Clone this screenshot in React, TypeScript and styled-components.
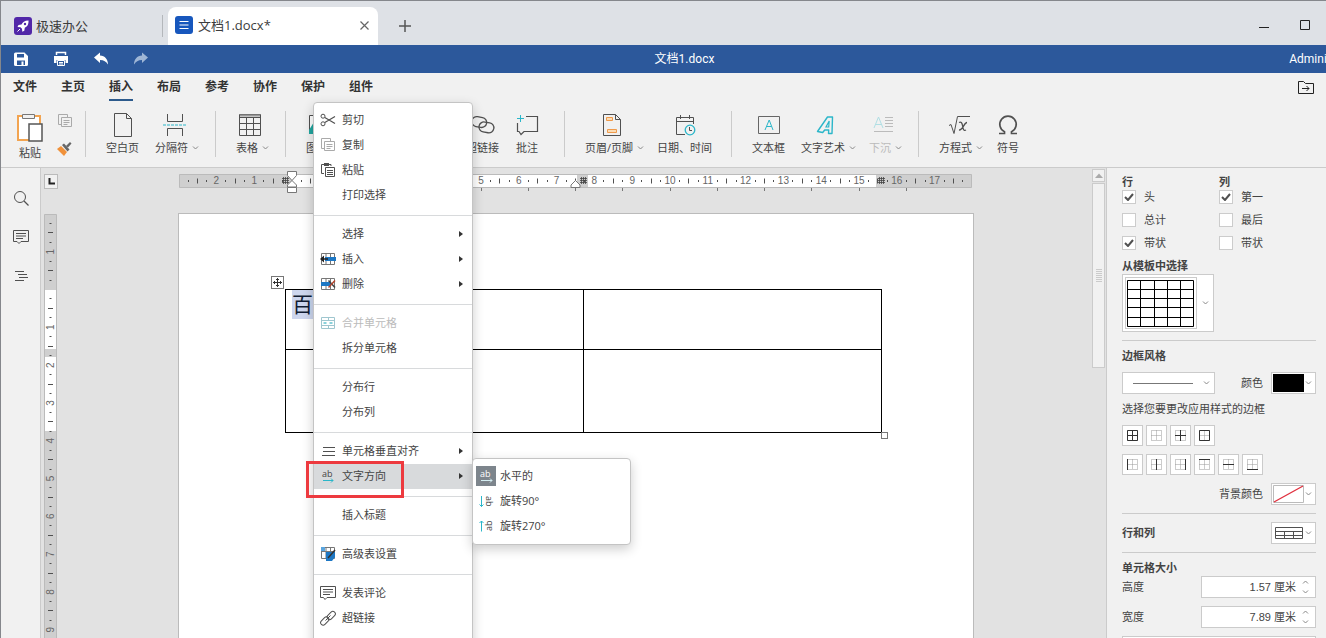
import React from 'react';
import styled, { createGlobalStyle, css } from 'styled-components';

const ui = '"Open Sans", "Noto Sans CJK SC", sans-serif';
const narrow = 'Roboto, "Noto Sans CJK SC", sans-serif';
const arial = '"Liberation Sans", "Noto Sans CJK SC", sans-serif';

const GlobalStyle = createGlobalStyle`
  * { box-sizing: border-box; }
  html, body, #root { height: 100%; }
  body { margin: 0; font-family: ${ui}; font-size: 11px; line-height: 14px; color: #444; overflow: hidden; }
  button { font: inherit; color: inherit; background: none; border: 0; padding: 0; margin: 0; }
  ul { list-style: none; margin: 0; padding: 0; }
  svg { display: block; flex: none; }
`;

const Frame = styled.div`
  position: relative;
  height: 100vh;
  display: flex;
  flex-direction: column;
  overflow: hidden;
  border-top: 1px solid #85878c;
  border-left: 1px solid #85878c;
  background: #f1f1f1;
`;

/* window tabs */
const WindowTabs = styled.header`
  flex: none;
  display: flex;
  align-items: flex-end;
  height: 44px;
  background: #dee1e6;
  font-size: 13px;
  line-height: 18px;
  color: #3c3c3c;
`;
const HomeTab = styled.button`
  display: flex;
  align-items: center;
  gap: 4px;
  width: 161px;
  height: 37px;
  margin-bottom: 1px;
  padding-left: 13px;
`;
const TabDivider = styled.span`
  width: 1px;
  height: 22px;
  margin: 0 5px 8px 0;
  background: #b4b7bb;
`;
const DocTab = styled.div`
  display: flex;
  align-items: center;
  gap: 5px;
  width: 210px;
  height: 38px;
  padding: 0 8px 2px 7px;
  background: #fff;
  border-radius: 8px 8px 0 0;
  span { flex: 1; }
`;
const NewTab = styled.button`
  display: flex;
  align-items: center;
  height: 38px;
  margin: 0 auto 0 21px;
`;
const WindowButtons = styled.div`
  display: flex;
  align-items: center;
  gap: 31px;
  height: 40px;
  padding-right: 16px;
`;

/* title bar */
const TitleBar = styled.div`
  flex: none;
  display: grid;
  grid-template-columns: 1fr auto 1fr;
  align-items: center;
  height: 28px;
  margin-right: -42px;
  background: #2c589b;
  color: #fff;
  font-family: ${narrow};
  font-size: 12px;
  line-height: 16px;
`;
const QuickActions = styled.div`
  display: flex;
  gap: 24px;
  padding-left: 12px;
`;
const UserName = styled.span`
  justify-self: end;
  padding-right: 6px;
`;

/* ribbon */
const MenuTabs = styled.nav`
  flex: none;
  display: flex;
  gap: 24px;
  height: 29px;
  padding: 5px 12px 0;
`;
const MenuTab = styled.button<{ $active?: boolean }>`
  height: 23px;
  padding-bottom: 3px;
  font-size: 12px;
  font-weight: 700;
  line-height: 18px;
  color: #333;
  border-bottom: 2px solid ${p => (p.$active ? '#2c5a8c' : 'transparent')};
`;
const FolderButton = styled.button`
  margin-left: auto;
  height: 20px;
`;
const Ribbon = styled.div`
  flex: none;
  display: flex;
  height: 66px;
  padding-top: 9px;
  border-bottom: 1px solid #cbcbcb;
`;
const Group = styled.div<{ $end?: number; $wide?: boolean; $last?: boolean }>`
  flex: none;
  display: flex;
  width: ${p => (p.$wide ? '279px' : 'auto')};
  height: 46px;
  padding: 2px ${p => p.$end ?? 3}px 0 20px;
  border-right: 1px solid ${p => (p.$last ? 'transparent' : '#cbcbcb')};
`;
const FarTools = styled.div`
  display: flex;
  margin-left: auto;
`;
const ClipboardGroup = styled.div`
  flex: none;
  display: flex;
  gap: 13px;
  width: 85px;
  height: 46px;
  padding: 2px 0 0 15px;
  border-right: 1px solid #cbcbcb;
`;
const PasteButton = styled.button`
  display: flex;
  flex-direction: column;
  align-items: center;
  gap: 3px;
`;
const SmallButtons = styled.div`
  display: flex;
  flex-direction: column;
  gap: 12px;
`;
const Tool = styled.button<{ $menu?: boolean }>`
  display: flex;
  flex-direction: column;
  align-items: center;
  gap: 4px;
  height: 44px;
  margin-right: ${p => (p.$menu ? 13 : 16)}px;
  white-space: nowrap;
  color: #444;
  > svg { margin-right: ${p => (p.$menu ? 5 : 0)}px; }
  &:disabled { color: #bbb; }
`;
const ToolLabel = styled.span`
  display: flex;
  align-items: center;
  gap: 4px;
`;

/* body */
const Body = styled.div`
  flex: 1;
  min-height: 0;
  display: flex;
`;
const SideBar = styled.aside`
  flex: none;
  display: flex;
  flex-direction: column;
  align-items: center;
  gap: 19px;
  width: 40px;
  padding-top: 20px;
  border-right: 1px solid #cbcbcb;
`;
const Workspace = styled.main`
  flex: 1;
  min-width: 0;
  display: grid;
  grid-template-columns: 19px minmax(0, 1fr) 14px;
  grid-template-rows: 45px minmax(0, 1fr);
  background: #e2e2e2;
  overflow: hidden;
`;
const Corner = styled.button`
  display: grid;
  place-items: center;
  width: 14px;
  height: 15px;
  margin: 6px 0 0 3px;
  background: #f1f1f1;
  border: 1px solid #bbb;
`;
const RulerRow = styled.div`
  display: flex;
  justify-content: center;
  padding-top: 2px;
  svg { overflow: visible; }
`;
const RulerColumn = styled.div`
  padding: 1px 0 0 3px;
  overflow: hidden;
`;
const Scroller = styled.div`
  grid-column: 3;
  grid-row: 1 / 3;
  display: flex;
  flex-direction: column;
  gap: 1px;
  padding: 1px 1px 0 0;
`;
const ScrollUp = styled.button`
  display: grid;
  place-items: center;
  height: 13px;
  background: #f1f1f1;
  border: 1px solid #cbcbcb;
`;
const Thumb = styled.div`
  display: grid;
  place-items: center;
  height: 185px;
  background: #f1f1f1;
  border: 1px solid #cbcbcb;
`;
const PageArea = styled.div`
  grid-column: 2;
  grid-row: 2;
  display: flex;
  justify-content: center;
`;
const Page = styled.div`
  flex: none;
  width: 796px;
  padding: 75px 91px 0 106px;
  background: #fff;
  border: 1px solid #bbb;
  border-bottom: 0;
`;
const TableBox = styled.div`
  position: relative;
`;
const DocTable = styled.table`
  width: 100%;
  table-layout: fixed;
  border-collapse: collapse;
  td { border: 1px solid #000; padding: 0 6px; vertical-align: top; }
`;
const DocRow = styled.tr<{ $tall?: boolean }>`
  height: ${p => (p.$tall ? 83 : 60)}px;
`;
const Selected = styled.span`
  display: inline-block;
  font-size: 21px;
  line-height: 29px;
  color: #111c33;
  background: #cdd6ee;
`;
const MoveHandle = styled.button`
  position: absolute;
  top: -13px;
  left: -14px;
  display: grid;
  place-items: center;
  width: 13px;
  height: 13px;
  background: #fff;
  border: 1px solid #777;
`;
const SizeHandle = styled.span`
  position: absolute;
  right: -6px;
  bottom: -6px;
  width: 7px;
  height: 7px;
  background: #fff;
  border: 1px solid #777;
`;

/* right panel */
const Panel = styled.aside`
  flex: none;
  width: 220px;
  padding: 7px 10px 0 15px;
  border-left: 1px solid #cbcbcb;
  overflow: hidden;
`;
const CheckColumns = styled.div`
  display: grid;
  grid-template-columns: 1fr 1fr;
`;
const Heading = styled.h2`
  margin: 0;
  padding-bottom: 2px;
  font-size: 11px;
  line-height: 13px;
  font-weight: 700;
  color: #444;
`;
const CheckList = styled.div`
  display: flex;
  flex-direction: column;
  gap: 9px;
`;
const CheckLabel = styled.label`
  display: grid;
  grid-template-columns: 14px 1fr;
  column-gap: 8px;
  align-items: center;
  svg { grid-area: 1 / 1; margin-left: 2px; pointer-events: none; }
`;
const Box = styled.input`
  grid-area: 1 / 1;
  appearance: none;
  width: 14px;
  height: 14px;
  margin: 0;
  background: #fff;
  border: 1px solid #ccc;
`;
const field = css`
  background: #fff;
  border: 1px solid #cbcbcb;
`;
const TemplateButton = styled.button`
  ${field}
  display: flex;
  align-items: center;
  gap: 5px;
  width: 92px;
  height: 58px;
  padding: 2px;
`;
const Preview = styled.span`
  display: grid;
  place-items: center;
  width: 72px;
  height: 52px;
  border: 1px solid #cbcbcb;
`;
const Rule = styled.hr`
  height: 1px;
  margin: 8px 0;
  border: 0;
  background: #cbcbcb;
`;
const Row = styled.div<{ $push?: boolean }>`
  display: flex;
  align-items: center;
  justify-content: ${p => (p.$push ? 'flex-end' : 'space-between')};
  gap: 8px;
`;
const RightPart = styled.div`
  display: flex;
  align-items: center;
  gap: 8px;
`;
const LineButton = styled.button`
  ${field}
  display: flex;
  align-items: center;
  justify-content: space-between;
  width: 93px;
  height: 22px;
  padding: 0 4px 0 10px;
`;
const SwatchButton = styled.button`
  ${field}
  display: flex;
  align-items: center;
  justify-content: space-between;
  width: 45px;
  height: 22px;
  padding: 0 3px 0 1px;
`;
const Swatch = styled.span`
  width: 31px;
  height: 18px;
  background: #000;
`;
const Stack = styled.div<{ $top: number; $gap?: number }>`
  display: flex;
  flex-direction: column;
  gap: ${p => p.$gap ?? 0}px;
  padding-top: ${p => p.$top}px;
`;
const BorderRow = styled.div`
  display: flex;
  gap: 3px;
`;
const BorderButton = styled.button`
  ${field}
  display: grid;
  place-items: center;
  width: 21px;
  height: 21px;
`;
const Spin = styled.div`
  ${field}
  display: flex;
  align-items: center;
  width: 115px;
  height: 22px;
  padding-right: 6px;
`;
const SpinInput = styled.input`
  flex: 1;
  min-width: 0;
  padding: 0 6px 0 0;
  border: 0;
  background: none;
  text-align: right;
  font: 11px/16px ${arial};
  color: #444;
`;
const SpinButtons = styled.span`
  display: flex;
  flex-direction: column;
  gap: 6px;
`;
const WideButton = styled.button`
  ${field}
  width: 100%;
  height: 22px;
`;

/* context menu */
const popup = css`
  position: absolute;
  background: #fff;
  border: 1px solid #c4c4c4;
  box-shadow: 0 4px 12px rgba(0, 0, 0, 0.2);
`;
const ContextMenu = styled.ul`
  ${popup}
  top: 101px;
  left: 312px;
  width: 160px;
  padding: 5px 0 20px;
  border-radius: 4px;
`;
const SubMenu = styled.ul`
  ${popup}
  top: -6px;
  left: 158px;
  width: 159px;
  padding: 5px 0;
  border-radius: 4px;
`;
const MenuItem = styled.li`
  position: relative;
`;
const MenuDivider = styled.li`
  height: 1px;
  margin: 7px 0 6px;
  background: #d8dadc;
`;
const MenuButton = styled.button<{ $active?: boolean }>`
  display: flex;
  align-items: center;
  gap: 6px;
  width: 100%;
  height: 25px;
  padding: 0 9px 2px 6px;
  text-align: left;
  background: ${p => (p.$active ? '#d8dadc' : 'transparent')};
  &:disabled { color: #bbb; }
`;
const MenuText = styled.span`
  flex: 1;
`;
const IconSlot = styled.span`
  display: grid;
  place-items: center;
  width: 16px;
  height: 16px;
`;
const SubButton = styled.button`
  display: flex;
  align-items: center;
  gap: 4px;
  width: 100%;
  height: 25px;
  padding: 0 0 2px 3px;
  text-align: left;
`;
const SubIcon = styled.span<{ $on?: boolean }>`
  display: grid;
  place-items: center;
  width: 20px;
  height: 20px;
  background: ${p => (p.$on ? '#7d858c' : 'transparent')};
`;
const Highlight = styled.div`
  position: absolute;
  top: 460px;
  left: 305px;
  width: 98px;
  height: 37px;
  border: 3px solid #ed3a3f;
  pointer-events: none;
`;

type SvgProps = { w: number; h: number; children: React.ReactNode; stroke?: string };
const Svg = ({ w, h, children, stroke = '#505050' }: SvgProps) => (
  <svg width={w} height={h} viewBox={`0 0 ${w} ${h}`} fill="none" stroke={stroke} aria-hidden="true">
    {children}
  </svg>
);

const Chevron = ({ up = false }: { up?: boolean }) => (
  <Svg w={7} h={4} stroke="#888">
    <path d={up ? 'M1 3.500l2.500-2.500 2.500 2.500' : 'M1 .5l2.500 2.500 2.500-2.500'} />
  </Svg>
);

const TEAL = '#2bb6c9';

const icons = {
  blank: (
    <Svg w={24} h={24}><path d="M3.500 .5h12l5 5v18h-17zM15.500 .5v5h5" /></Svg>
  ),
  breaks: (
    <Svg w={24} h={24}>
      <path d="M4.500 1v7.500h15V1M4.500 23v-7.500h15V23" />
      <path d="M0 12h24" stroke={TEAL} strokeDasharray="3 1" />
    </Svg>
  ),
  table: (
    <Svg w={24} h={24}>
      <path d="M1.500 1.500h21v21h-21zM8.500 4v18M15.500 4v18M2 10.500h20M2 16.500h20" />
      <path d="M2 2.500h20" stroke="#999" strokeWidth="2" />
      <path d="M1 4.500h22" />
    </Svg>
  ),
  image: (
    <Svg w={24} h={24}>
      <path d="M1.500 2.500h21v18h-21z" fill="#fff" />
      <path d="M1 17l5-8 6 6 3-3 7 6v3H1z" fill="#22a7a0" stroke="none" />
    </Svg>
  ),
  link: (
    <Svg w={24} h={24}>
      <rect x=".7" y="4" width="15" height="10" rx="5" transform="rotate(10 8 9)" strokeWidth="1.300" />
      <rect x="8" y="9.500" width="15" height="10" rx="5" transform="rotate(10 16 14)" strokeWidth="1.300" />
    </Svg>
  ),
  comment: (
    <Svg w={24} h={24}>
      <path d="M11 3.500h11.500v15H9l-3 3-2-3H2.500V10" strokeWidth="1.200" />
      <path d="M5.500 2v7M2 5.500h7" stroke={TEAL} />
    </Svg>
  ),
  header: (
    <Svg w={24} h={24}>
      <path d="M3.500 1.500h12l5 5v16h-17zM15.500 1.500v5h5" />
      <path d="M6.500 4.500h6v3h-6zM7.500 16.500h9v3h-9z" stroke="#f09a4a" fill="#fbdcb4" />
    </Svg>
  ),
  date: (
    <Svg w={24} h={24}>
      <path d="M12 21.500H3.500v-17h17V11M3.500 8.500h17M7.500 2v4M16.500 2v4" />
      <circle cx="17" cy="17" r="4.800" stroke={TEAL} strokeWidth="1.300" />
      <path d="M16.500 14v3.500H19" />
    </Svg>
  ),
  textbox: (
    <Svg w={24} h={24}>
      <path d="M1.500 3.500h21v17h-21z" stroke="#666" />
      <path d="M8 17l4.200-10L16 17M9.500 13.500h5" stroke={TEAL} />
    </Svg>
  ),
  art: (
    <Svg w={24} h={24} stroke={TEAL}>
      <path d="M3.500 18.500L13.500 4h5l-.5 16.500h-3.500l.2-3.500h-4l-2 2.500z" strokeWidth="1.400" strokeLinejoin="round" />
      <path d="M12 14h2.700l.5-6z" strokeWidth="1.200" />
    </Svg>
  ),
  dropcap: (
    <Svg w={24} h={24} stroke="#bbb">
      <path d="M3 15L7.500 4 12 15M4.500 11.500h6" stroke="#b0dfe4" />
      <path d="M14 4.500h8M14 7.500h8M14 10.500h8M14 13.500h8M3 18.500h19" />
    </Svg>
  ),
  equation: (
    <Svg w={24} h={24}>
      <path d="M2 12.500l2-1 3 9 3.500-17H23" />
      <path d="M12 9.500c2-1 3 0 3.500 3s1 6 3.500 4.500M20 9.500c-3 0-4 8-8 7.500" strokeWidth="1.300" />
    </Svg>
  ),
  symbol: (
    <Svg w={24} h={24}>
      <path d="M3 20.500h5.500v-1.800a8.200 8.200 0 1 1 7 0v1.800H21" strokeWidth="1.700" />
    </Svg>
  ),
};

const CopyIcon = () => (
  <Svg w={16} h={16} stroke="#aaa">
    <path d="M4 11.500H1.500v-10h9V4M4.500 4.500h10v9h-10zM6.500 7.500h6M6.500 9.500h6M6.500 11.500h4" />
  </Svg>
);

const menuIcons = {
  cut: (
    <Svg w={16} h={16}>
      <circle cx="3" cy="4.200" r="2" /><circle cx="3" cy="11.800" r="2" />
      <path d="M4.800 5.500L15 11.500M4.800 10.500L15 4.500" strokeWidth="1.200" />
    </Svg>
  ),
  copy: <CopyIcon />,
  paste: (
    <Svg w={16} h={16}>
      <path d="M4 11.500H1.500v-9H11V4" /><path d="M4 2.500h5" strokeWidth="3" />
      <path d="M5.500 5.500h9v9h-9zM7 8.500h6M7 10.500h6M7 12.500h6" />
    </Svg>
  ),
  insert: (
    <Svg w={16} h={16} stroke="#777">
      <path d="M1.500 2.500h13v11h-13zM6 2v12M10.500 2v12" />
      <path d="M5 8h11" stroke="#1d77c4" strokeWidth="4" />
      <path d="M0 8l4-3.500v7z" fill="#222" stroke="none" />
      <path d="M3 8h5" stroke="#222" strokeWidth="1.500" />
    </Svg>
  ),
  remove: (
    <Svg w={16} h={16} stroke="#777">
      <path d="M1.500 2.500h13v11h-13zM6 2v12M10.500 2v12" />
      <path d="M1 8h10" stroke="#1d77c4" strokeWidth="4" />
      <path d="M8.500 4.500l6.500 7" stroke="#444" strokeWidth="1.500" />
      <path d="M15 4.500l-6.500 7" stroke="#b5452c" strokeWidth="1.500" />
    </Svg>
  ),
  merge: (
    <Svg w={16} h={16} stroke="#9fc6cf">
      <path d="M1.500 2.500h13v11h-13zM1.500 5.500h13M1.500 10.500h13M8.500 2v3M8.500 11v3" />
      <path d="M3.500 8h3M12.500 8h-3" stroke="#62c3d0" strokeWidth="1.500" />
    </Svg>
  ),
  valign: (
    <Svg w={16} h={16}><path d="M3 4.500h12M3 8.500h12M2 12.500h13" /></Svg>
  ),
  direction: (
    <Svg w={16} h={16} stroke={TEAL}>
      <text x="2" y="9" fontSize="9" fill="#444" stroke="none">ab</text>
      <path d="M3 12.500h10M11 10.500l2 2-2 2" />
    </Svg>
  ),
  advanced: (
    <Svg w={16} h={16} stroke="#777">
      <path d="M1.500 1.500h13v11h-13zM6 1v12M10.500 1v12M1 5.500h14" />
      <path d="M6 6h9v5l-3 4H6z" fill="#1d77c4" stroke="none" />
      <path d="M1 1h4v4H1z" fill="#5aa5de" stroke="none" />
      <path d="M8 12l7-8" stroke="#333" strokeWidth="1.500" />
    </Svg>
  ),
  note: (
    <Svg w={16} h={16}>
      <path d="M.5 1.500h15v11H7l-2 2-1.500-2h-3zM3 4.500h10M3 7h10M3 9.500h7" />
    </Svg>
  ),
  chain: (
    <Svg w={16} h={16}>
      <rect x="6.500" y="3" width="9.500" height="5" rx="2.500" transform="rotate(-45 11.200 5.500)" />
      <rect x="0" y="8.500" width="9.500" height="5" rx="2.500" transform="rotate(-45 4.800 11)" />
      <path d="M5.500 10.500l5-5" />
    </Svg>
  ),
};

type IconName = keyof typeof menuIcons;
type Entry = { label: string; icon?: IconName; sub?: boolean; disabled?: boolean; active?: boolean };

const menuGroups: Entry[][] = [
  [{ label: '剪切', icon: 'cut' }, { label: '复制', icon: 'copy' }, { label: '粘贴', icon: 'paste' }, { label: '打印选择' }],
  [{ label: '选择', sub: true }, { label: '插入', icon: 'insert', sub: true }, { label: '删除', icon: 'remove', sub: true }],
  [{ label: '合并单元格', icon: 'merge', disabled: true }, { label: '拆分单元格' }],
  [{ label: '分布行' }, { label: '分布列' }],
  [{ label: '单元格垂直对齐', icon: 'valign', sub: true }, { label: '文字方向', icon: 'direction', sub: true, active: true }],
  [{ label: '插入标题' }],
  [{ label: '高级表设置', icon: 'advanced' }],
  [{ label: '发表评论', icon: 'note' }, { label: '超链接', icon: 'chain' }],
];

const RibbonTool = ({ icon, label, menu, disabled }: { icon: keyof typeof icons; label: string; menu?: boolean; disabled?: boolean }) => (
  <Tool $menu={menu} disabled={disabled}>
    {icons[icon]}
    <ToolLabel>{label}{menu && <Chevron />}</ToolLabel>
  </Tool>
);

const QUARTER = 9.45;
const digits = { fontFamily: 'Liberation Sans, sans-serif', fontSize: 10, fill: '#666', stroke: 'none', textAnchor: 'middle' as const };

const Hash = ({ x }: { x: number }) => (
  <path d={`M${x - 3} 8.500h7M${x - 3} 10.500h7M${x - 3} 12.500h7M${x - 1.5} 7v7M${x + .5} 7v7M${x + 2.500} 7v7`} stroke="#444" strokeWidth=".8" />
);

const HorizontalRuler = () => {
  const zero = 114;
  const marks = [];
  for (let i = -11; i <= 71; i++) {
    const x = zero + i * QUARTER;
    if (i === 0) continue;
    if (i % 4 === 0) marks.push(<text key={i} x={x} y={14} {...digits}>{Math.abs(i / 4)}</text>);
    else {
      const half = i % 2 === 0 ? 2.5 : 1;
      const px = Math.floor(x) + 0.5;
      marks.push(<path key={i} d={`M${px} ${11 - half}v${half * 2}`} />);
    }
  }
  const stops = Array.from({ length: 13 }, (_, k) => Math.floor(zero + (k + 1) * 47.25) + 0.5);
  return (
    <Svg w={796} h={24}>
      <path d="M1.500 4.500h792v13h-792z" fill="#cfcfcf" stroke="#bbb" />
      <path d="M114 5h285v12H114zM410 5h288v12H410z" fill="#fff" stroke="none" />
      {marks}
      {stops.map(x => <path key={x} d={`M${x} 18v3`} stroke="#777" />)}
      <Hash x={107} /><Hash x={405} /><Hash x={703} />
      <path d="M109.500 1.500h9v4l-4.500 5-4.500-5zM114 10.500l4.500 4.500v2h-9v-2zM109.500 17.500h9v5h-9z" fill="#fff" stroke="#777" />
      <path d="M397.500 10.500l4.500 4.500v2.500h-9V15z" fill="#fff" stroke="#777" />
    </Svg>
  );
};

const VerticalRuler = () => {
  const zero = 75.5;
  const marks = [];
  for (let i = -7; i <= 40; i++) {
    const y = zero + i * QUARTER;
    if (i === 0) continue;
    if (i % 4 === 0) {
      marks.push(<text key={i} transform={`translate(10 ${y}) rotate(-90)`} {...digits}>{Math.abs(i / 4)}</text>);
    } else {
      const half = i % 2 === 0 ? 2.5 : 1;
      marks.push(<path key={i} d={`M${6.5 - half} ${Math.floor(y) + 0.5}h${half * 2}`} />);
    }
  }
  return (
    <Svg w={13} h={460}>
      <path d="M.5 .5h12v470H.5z" fill="#cfcfcf" stroke="#bbb" />
      <path d="M1 76h11v59H1zM1 143h11v74H1z" fill="#fff" stroke="none" />
      {marks}
    </Svg>
  );
};

/* each border drawing: dotted cell outline plus the solid strokes it sets */
const outline = 'M1.500 1.500h10v10h-10zM6.500 1.500v10M1.500 6.500h10';
const borderKinds: [string, string][][] = [
  [['全部边框', outline], ['无边框', ''], ['内部边框', 'M6.500 1v11M1 6.500h11'], ['外部边框', 'M1.500 1.500h10v10h-10z']],
  [['左边框', 'M1.500 1v11'], ['内部竖线', 'M6.500 1v11'], ['右边框', 'M11.500 1v11'], ['上边框', 'M1 1.500h11'], ['内部横线', 'M1 6.500h11'], ['下边框', 'M1 11.500h11']],
];

const checkSets = [
  { title: '行', items: [['头', true], ['总计', false], ['带状', true]] as [string, boolean][] },
  { title: '列', items: [['第一', true], ['最后', false], ['带状', false]] as [string, boolean][] },
];

const SpinField = ({ id, label, value }: { id: string; label: string; value: string }) => (
  <Row>
    <label htmlFor={id}>{label}</label>
    <Spin>
      <SpinInput id={id} defaultValue={value} />
      <SpinButtons>
        <button aria-label="增加"><Chevron up /></button>
        <button aria-label="减少"><Chevron /></button>
      </SpinButtons>
    </Spin>
  </Row>
);

const TablePanel = () => (
  <Panel>
    <CheckColumns>
      {checkSets.map(set => (
        <div key={set.title}>
          <Heading>{set.title}</Heading>
          <CheckList>
            {set.items.map(([label, on]) => (
              <CheckLabel key={label}>
                <Box type="checkbox" defaultChecked={on} />
                {on && <Svg w={10} h={8}><path d="M1 4l3 3 5-6" strokeWidth="2" /></Svg>}
                {label}
              </CheckLabel>
            ))}
          </CheckList>
        </div>
      ))}
    </CheckColumns>
    <Stack $top={9}>
      <Heading>从模板中选择</Heading>
      <TemplateButton aria-label="表格模板">
        <Preview>
          <Svg w={68} h={47} stroke="#000">
            <path d="M.5 .5h66v46H.5zM13.500 0v47M27.500 0v47M40.500 0v47M53.500 0v47M0 9.500h67M0 18.500h67M0 27.500h67M0 37.500h67" />
          </Svg>
        </Preview>
        <Chevron />
      </TemplateButton>
    </Stack>
    <Rule />
    <Heading>边框风格</Heading>
    <Stack $top={8}>
      <Row>
        <LineButton aria-label="边框线型">
          <Svg w={60} h={1} stroke="#777"><path d="M0 .5h60" /></Svg>
          <Chevron />
        </LineButton>
        <RightPart>
          <span>颜色</span>
          <SwatchButton aria-label="颜色"><Swatch /><Chevron /></SwatchButton>
        </RightPart>
      </Row>
    </Stack>
    <Stack $top={8}>选择您要更改应用样式的边框</Stack>
    <Stack $top={9} $gap={8}>
      {borderKinds.map((row, r) => (
        <BorderRow key={r}>
          {row.map(([name, d]) => (
            <BorderButton key={name} aria-label={name}>
              <Svg w={13} h={13}>
                <path d={outline} stroke="#999" strokeDasharray="1 1" />
                {d && <path d={d} stroke="#333" />}
              </Svg>
            </BorderButton>
          ))}
        </BorderRow>
      ))}
    </Stack>
    <Stack $top={8}>
      <Row $push>
        <span>背景颜色</span>
        <SwatchButton aria-label="背景颜色">
          <Svg w={31} h={18} stroke="#bbb">
            <path d="M.5 .5h30v17H.5z" />
            <path d="M1 17L30 1" stroke="#e0313f" strokeWidth="1.300" />
          </Svg>
          <Chevron />
        </SwatchButton>
      </Row>
    </Stack>
    <Rule />
    <Row>
      <Heading>行和列</Heading>
      <SwatchButton aria-label="行和列">
        <Svg w={31} h={13}>
          <path d="M2.500 .5h27v11h-27zM2 4.500h28M2 8.500h28M11.500 4v8M20.500 4v8" />
        </Svg>
        <Chevron />
      </SwatchButton>
    </Row>
    <Rule />
    <Heading>单元格大小</Heading>
    <Stack $top={0} $gap={8}>
      <SpinField id="cell-height" label="高度" value="1.57 厘米" />
      <SpinField id="cell-width" label="宽度" value="7.89 厘米" />
      <WideButton aria-label="平均分布" />
    </Stack>
  </Panel>
);

const TextDirectionMenu = () => (
  <SubMenu>
    <MenuItem>
      <SubButton>
        <SubIcon $on>
          <Svg w={16} h={16} stroke="#d5eef2">
            <text x="2" y="9" fontSize="9" fill="#fff" stroke="none">ab</text>
            <path d="M3 12.500h11M12 10.500l2 2-2 2" />
          </Svg>
        </SubIcon>
        水平的
      </SubButton>
    </MenuItem>
    <MenuItem>
      <SubButton>
        <SubIcon>
          <Svg w={16} h={16} stroke={TEAL}>
            <path d="M3.500 3v10.500M1.500 11.500l2 2 2-2" />
            <text transform="translate(7.500 3) rotate(90)" fontSize="9" fill="#444" stroke="none">ab</text>
          </Svg>
        </SubIcon>
        旋转90°
      </SubButton>
    </MenuItem>
    <MenuItem>
      <SubButton>
        <SubIcon>
          <Svg w={16} h={16} stroke={TEAL}>
            <path d="M3.500 13.500V3M1.500 5l2-2 2 2" />
            <text transform="translate(13.500 13) rotate(-90)" fontSize="9" fill="#444" stroke="none">ab</text>
          </Svg>
        </SubIcon>
        旋转270°
      </SubButton>
    </MenuItem>
  </SubMenu>
);

export default function App() {
  return (
    <Frame>
      <GlobalStyle />
      <WindowTabs>
        <HomeTab>
          <Svg w={18} h={18} stroke="none">
            <rect width="18" height="18" rx="3" fill="#5127a8" />
            <path d="M14.500 3.500c-4 0-6 2-7 4l-3 .5-1 2 3 .3 1.500 1.500.3 3 2-1 .5-3c2-1 4-3 3.700-7.300z" fill="#fff" />
            <circle cx="11" cy="7" r="1.200" fill="#5127a8" />
            <path d="M3.500 14.500l2.500-2.500" stroke="#fff" />
          </Svg>
          极速办公
        </HomeTab>
        <TabDivider />
        <DocTab>
          <Svg w={18} h={18} stroke="#fff">
            <rect width="18" height="18" rx="3" fill="#1757bd" stroke="none" />
            <path d="M4.500 5.500h9M4.500 9h9M4.500 12.500h9" strokeWidth="1.200" />
          </Svg>
          <span>文档1.docx*</span>
          <button aria-label="关闭"><Svg w={11} h={11} stroke="#666"><path d="M1.500 1.500l8 8M9.500 1.500l-8 8" strokeWidth="1.200" /></Svg></button>
        </DocTab>
        <NewTab aria-label="新建"><Svg w={12} h={12} stroke="#555"><path d="M6 0v12M0 6h12" strokeWidth="1.500" /></Svg></NewTab>
        <WindowButtons>
          <button aria-label="最小化"><Svg w={10} h={10} stroke="#222"><path d="M0 7.500h10" /></Svg></button>
          <button aria-label="最大化"><Svg w={10} h={10} stroke="#222"><path d="M.5 .5h9v9h-9z" /></Svg></button>
        </WindowButtons>
      </WindowTabs>

      <TitleBar>
        <QuickActions>
          <button aria-label="保存">
            <Svg w={16} h={16} stroke="none">
              <path fillRule="evenodd" d="M1 3a1.500 1.500 0 0 1 1.500-1.500h9L15 5v8.500a1.500 1.500 0 0 1-1.500 1.500h-11A1.500 1.500 0 0 1 1 13.500zM4 3v3.500h7V3zM4 9.500V14h8V9.500zM8.500 10.500h2V14h-2z" fill="#fff" />
            </Svg>
          </button>
          <button aria-label="打印">
            <Svg w={16} h={16} stroke="#fff">
              <path d="M3.500 4V1.500h9V4" strokeWidth="1.500" />
              <path d="M1 5h14v7h-2.500V9h-9v3H1z" fill="#fff" stroke="none" />
              <path d="M4.500 9.500h7v5h-7zM6 11.500h4M6 13h4" />
            </Svg>
          </button>
          <button aria-label="撤销">
            <Svg w={16} h={16} stroke="none"><path d="M1 6.500L7 1.500v3c5 0 8 4 8 9-2-3-4-4.500-8-4.500v3z" fill="#fff" /></Svg>
          </button>
          <button aria-label="恢复">
            <Svg w={16} h={16} stroke="none"><path d="M15 6.500L9 1.500v3c-5 0-8 4-8 9 2-3 4-4.500 8-4.500v3z" fill="#9fb6d6" /></Svg>
          </button>
        </QuickActions>
        <span>文档1.docx</span>
        <UserName>Administrator</UserName>
      </TitleBar>

      <MenuTabs>
        {['文件', '主页', '插入', '布局', '参考', '协作', '保护', '组件'].map(name => (
          <MenuTab key={name} $active={name === '插入'}>{name}</MenuTab>
        ))}
        <FolderButton aria-label="打开文件位置">
          <Svg w={16} h={14} stroke="#222"><path d="M.5 12.500V.5h5l2 2h8v10zM4 7.500h7M8.500 5l2.500 2.500L8.500 10" /></Svg>
        </FolderButton>
      </MenuTabs>

      <Ribbon>
        <ClipboardGroup>
          <PasteButton>
            <Svg w={28} h={30}>
              <path d="M2 3h22v24H2z" stroke="#f2a451" strokeWidth="2" fill="#fff" />
              <path d="M6.500 1.500h12v4h-12z" fill="#f1f1f1" stroke="#777" />
              <path d="M13 11h13v17H13z" fill="#fff" stroke="#555" strokeWidth="1.500" />
            </Svg>
            粘贴
          </PasteButton>
          <SmallButtons>
            <button aria-label="复制"><CopyIcon /></button>
            <button aria-label="格式刷">
              <Svg w={16} h={16} stroke="none">
                <path d="M0 8l4-3 6 6-3 4z" fill="#f0913a" />
                <path d="M5 4l2-1.500 5.500 6-2 2z" fill="#666" />
                <path d="M9 5l4-4 1.500 1.500L11 6.500z" fill="#666" />
              </Svg>
            </button>
          </SmallButtons>
        </ClipboardGroup>
        <Group>
          <RibbonTool icon="blank" label="空白页" />
          <RibbonTool icon="breaks" label="分隔符" menu />
        </Group>
        <Group>
          <RibbonTool icon="table" label="表格" menu />
        </Group>
        <Group $wide $end={9}>
          <RibbonTool icon="image" label="图片" menu />
          <FarTools>
            <RibbonTool icon="link" label="超链接" />
            <RibbonTool icon="comment" label="批注" />
          </FarTools>
        </Group>
        <Group>
          <RibbonTool icon="header" label="页眉/页脚" menu />
          <RibbonTool icon="date" label="日期、时间" />
        </Group>
        <Group>
          <RibbonTool icon="textbox" label="文本框" />
          <RibbonTool icon="art" label="文字艺术" menu />
          <RibbonTool icon="dropcap" label="下沉" menu disabled />
        </Group>
        <Group $last>
          <RibbonTool icon="equation" label="方程式" menu />
          <RibbonTool icon="symbol" label="符号" />
        </Group>
      </Ribbon>

      <Body>
        <SideBar>
          <button aria-label="搜索"><Svg w={20} h={20}><circle cx="9" cy="9" r="5.500" /><path d="M13 13l4.500 4.500" strokeWidth="1.200" /></Svg></button>
          <button aria-label="评论"><Svg w={20} h={20}><path d="M2.500 3.500h15v11H10l-2 2-2-2H2.500zM5 6.500h10M5 9h10M5 11.500h7" /></Svg></button>
          <button aria-label="导航"><Svg w={20} h={20}><path d="M4 5.500h9M7 8.500h9M8 11.500h9M4 14.500h9" /></Svg></button>
        </SideBar>
        <Workspace>
          <Corner aria-label="制表位"><Svg w={7} h={7}><path d="M1.500 0v5.500H7" stroke="#222" strokeWidth="2" /></Svg></Corner>
          <RulerRow><HorizontalRuler /></RulerRow>
          <RulerColumn><VerticalRuler /></RulerColumn>
          <Scroller>
            <ScrollUp aria-label="向上滚动"><Svg w={8} h={5} stroke="none"><path d="M0 5l4-4.500L8 5z" fill="#aaa" /></Svg></ScrollUp>
            <Thumb><Svg w={6} h={13} stroke="#cbcbcb"><path d="M0 .5h6M0 2.500h6M0 4.500h6M0 6.500h6M0 8.500h6M0 10.500h6M0 12.500h6" /></Svg></Thumb>
          </Scroller>
          <PageArea>
            <Page>
              <TableBox>
                <DocTable>
                  <tbody>
                    <DocRow><td><Selected>百度</Selected></td><td /></DocRow>
                    <DocRow $tall><td /><td /></DocRow>
                  </tbody>
                </DocTable>
                <MoveHandle aria-label="移动表格">
                  <Svg w={9} h={9} stroke="#333"><path d="M4.500 0v9M0 4.500h9M3 1.500h3M3 7.500h3M1.500 3v3M7.500 3v3" /></Svg>
                </MoveHandle>
                <SizeHandle />
              </TableBox>
            </Page>
          </PageArea>
        </Workspace>
        <TablePanel />
      </Body>

      <ContextMenu>
        {menuGroups.map((group, g) => (
          <React.Fragment key={g}>
            {g > 0 && <MenuDivider role="separator" />}
            {group.map(item => (
              <MenuItem key={item.label}>
                <MenuButton $active={item.active} disabled={item.disabled}>
                  <IconSlot>{item.icon && menuIcons[item.icon]}</IconSlot>
                  <MenuText>{item.label}</MenuText>
                  {item.sub && <Svg w={4} h={6} stroke="none"><path d="M0 0l4 3-4 3z" fill="#333" /></Svg>}
                </MenuButton>
                {item.active && <TextDirectionMenu />}
              </MenuItem>
            ))}
          </React.Fragment>
        ))}
      </ContextMenu>
      <Highlight />
    </Frame>
  );
}
